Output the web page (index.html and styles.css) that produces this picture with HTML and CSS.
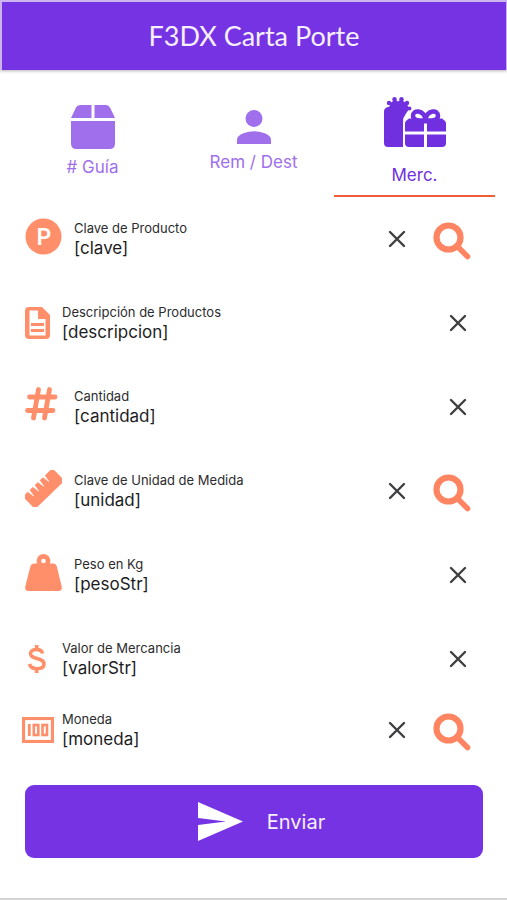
FILE: index.html
```html
<!DOCTYPE html>
<html lang="es">
<head>
<meta charset="utf-8">
<meta name="viewport" content="width=device-width, initial-scale=1">
<title>F3DX Carta Porte</title>
<link rel="stylesheet" href="styles.css">
</head>
<body>
<svg class="sprite" aria-hidden="true">
  <symbol id="close" viewBox="0 0 26 26"><path d="M6 6l14 14M20 6L6 20" fill="none" stroke="#3f3f42" stroke-width="2.400" stroke-linecap="round"/></symbol>
  <symbol id="search" viewBox="0 0 38 38"><circle cx="15.500" cy="15.500" r="12" fill="none" stroke="currentColor" stroke-width="6.200"/><path d="M25 25l9.500 9.500" stroke="currentColor" stroke-width="5.600" stroke-linecap="round"/></symbol>
</svg>
<header class="topbar"><h1>F3DX Carta Porte</h1></header>
<nav class="tabs">
  <a class="tab" href="#guia">
    <svg width="44" height="44" viewBox="0 0 44 44" fill="currentColor"><path d="M9 0h11.500v13H0L5 2.500Q6.200 0 9 0zM23.500 0H35q2.800 0 4 2.500L44 13H23.500zM0 16h44v22.500q0 5.500-5.500 5.500h-33Q0 44 0 38.500z"/></svg>
    <span>#&nbsp;Guía</span>
  </a>
  <a class="tab" href="#remdest">
    <svg width="34" height="34" viewBox="0 0 34 34" fill="currentColor"><circle cx="17" cy="8.500" r="8.500"/><path d="M0 34v-4.500C0 24 11 21.200 17 21.200S34 24 34 29.500V34z"/></svg>
    <span>Rem / Dest</span>
  </a>
  <a class="tab active" href="#merc" aria-current="page">
    <svg width="62" height="60" viewBox="0 0 62 60"><g fill="currentColor"><circle cx="5" cy="6" r="2.200"/><circle cx="10.500" cy="2.200" r="2.200"/><circle cx="17.500" cy="2.200" r="2.200"/><circle cx="23" cy="6" r="2.200"/><circle cx="25.500" cy="11.500" r="1.900"/><path d="M6.500 6l4.500-3.500 3 2 3-2L22 6l3.500 5.500-3.500 5-2.800 5V50H4q-4 0-4-4V14q0-2.500 2.500-3.500l3-1z"/></g><path d="M19 50V26q0-3.500 3-5l3.500-2q.500-8 8.500-8 5 0 8 3.500 3-3.500 8-3.500 9 0 9.500 8.500V50z" fill="#fff"/><path d="M21 26.500q0-2 1.500-3l2.500-2h33l2.500 2q1.500 1 1.500 3v8H21zM21 37.500h41V46q0 4-4 4H25q-4 0-4-4z" fill="currentColor"/><path d="M41.500 23.500c-3 0-12.500 1-12.500-4.500 0-7 10.500-6 12.500 3 2-9 12.500-10 12.500-3 0 5.500-9.500 4.500-12.500 4.500z" fill="#fff" stroke="currentColor" stroke-width="4.500" stroke-linejoin="round"/><path d="M40 26.500h3V50h-3z" fill="#fff"/></svg>
    <span>Merc.</span>
  </a>
</nav>
<form class="form">
  <div class="row">
    <span class="icon raised"><svg width="37" height="37" viewBox="0 0 37 37"><circle cx="18.500" cy="18.500" r="18" fill="currentColor"/><text class="badge-letter" x="19" y="26.500" text-anchor="middle">P</text></svg></span>
    <div class="field"><label for="clave">Clave de Producto</label><input id="clave" value="[clave]"></div>
    <button class="clear" type="button" aria-label="Borrar"><svg width="26" height="26"><use href="#close"/></svg></button>
    <button class="search" type="button" aria-label="Buscar"><svg width="38" height="38"><use href="#search"/></svg></button>
  </div>
  <div class="row">
    <span class="icon small"><svg width="25" height="32" viewBox="0 0 25 32"><path d="M4 0h13l8 8v20q0 4-4 4H4q-4 0-4-4V4q0-4 4-4zm.500 3.500v25h16V12H13V3.500z" fill="currentColor" fill-rule="evenodd"/><path d="M6 17.500h13M6 23.500h13" stroke="currentColor" stroke-width="2.800"/></svg></span>
    <div class="field"><label for="descripcion">Descripción de Productos</label><input id="descripcion" value="[descripcion]"></div>
    <button class="clear" type="button" aria-label="Borrar"><svg width="26" height="26"><use href="#close"/></svg></button>
  </div>
  <div class="row">
    <span class="icon raised"><svg width="37" height="34" viewBox="0 0 37 34"><path d="M13.500 2.500l-5 28.500M24.500 2.500l-5 28.500M4.500 10h25.500M2.500 23.500h25.500" stroke="currentColor" stroke-width="4.800" stroke-linecap="round"/></svg></span>
    <div class="field"><label for="cantidad">Cantidad</label><input id="cantidad" value="[cantidad]"></div>
    <button class="clear" type="button" aria-label="Borrar"><svg width="26" height="26"><use href="#close"/></svg></button>
  </div>
  <div class="row">
    <span class="icon raised"><svg width="37" height="37" viewBox="0 0 37 37"><g transform="rotate(-44 18.500 18.500)"><rect x="-2" y="10" width="41" height="17.500" rx="4" fill="currentColor"/><path d="M5 9.500h2.400l-1.200 7.500zM12 9.500h2.400l-1.200 7.500zM19 9.500h2.400l-1.200 7.500zM26 9.500h2.400l-1.200 7.500z" fill="#fff" stroke="#fff" stroke-width=".600"/></g></svg></span>
    <div class="field"><label for="unidad">Clave de Unidad de Medida</label><input id="unidad" value="[unidad]"></div>
    <button class="clear" type="button" aria-label="Borrar"><svg width="26" height="26"><use href="#close"/></svg></button>
    <button class="search" type="button" aria-label="Buscar"><svg width="38" height="38"><use href="#search"/></svg></button>
  </div>
  <div class="row">
    <span class="icon raised"><svg width="37" height="37" viewBox="0 0 37 37"><path d="M9 9.500h19.500q2.500 0 3.200 2.500l5 20.500q.900 4.500-3.200 4.500H3.500Q-.600 37 .300 32.500L5.500 12Q6.300 9.500 9 9.500z" fill="currentColor"/><circle cx="18.500" cy="7" r="4.600" fill="#fff" stroke="currentColor" stroke-width="4.600"/></svg></span>
    <div class="field"><label for="peso">Peso en Kg</label><input id="peso" value="[pesoStr]"></div>
    <button class="clear" type="button" aria-label="Borrar"><svg width="26" height="26"><use href="#close"/></svg></button>
  </div>
  <div class="row">
    <span class="icon small"><svg width="25" height="30" viewBox="0 0 25 30"><path d="M17.500 9.500C17 6.700 14.800 5.500 11.500 5.500c-3.700 0-6 1.600-6 4.200 0 6.300 13.500 3.300 13.500 10.300 0 3-2.800 4.700-7 4.700-4.500 0-6.800-1.700-7.500-4.700M11.700 1v4M11.700 25v4" fill="none" stroke="currentColor" stroke-width="3.600"/></svg></span>
    <div class="field"><label for="valor">Valor de Mercancia</label><input id="valor" value="[valorStr]"></div>
    <button class="clear" type="button" aria-label="Borrar"><svg width="26" height="26"><use href="#close"/></svg></button>
  </div>
  <div class="row last">
    <span class="icon small"><svg width="32" height="26" viewBox="0 0 32 26" fill="none" stroke="currentColor"><rect x="1.500" y="1.500" width="29" height="23" stroke-width="3.200"/><path d="M7.300 7v12" stroke-width="2.800"/><rect x="11.800" y="8" width="4.500" height="10" stroke-width="2.600"/><rect x="20.500" y="8" width="4.500" height="10" stroke-width="2.600"/></svg></span>
    <div class="field"><label for="moneda">Moneda</label><input id="moneda" value="[moneda]"></div>
    <button class="clear" type="button" aria-label="Borrar"><svg width="26" height="26"><use href="#close"/></svg></button>
    <button class="search" type="button" aria-label="Buscar"><svg width="38" height="38"><use href="#search"/></svg></button>
  </div>
  <button class="submit" type="submit">
    <svg width="45" height="39" viewBox="0 0 45 39" fill="#fff"><path d="M0 0l45 19.500L0 39V23l28-3.500L0 16z"/></svg>
    <span>Enviar</span>
  </button>
</form>
</body>
</html>
```
FILE: styles.css
```css
* { box-sizing: border-box; }

body {
  margin: 0;
  min-height: 100vh;
  background: #fff;
  border-bottom: 2px solid #d3d3d3;
  font-family: Inter, "Liberation Sans", sans-serif;
  color: #1c1c1e;
}

svg { display: block; flex-shrink: 0; }
.sprite { position: absolute; width: 0; height: 0; }

.topbar {
  height: 70px;
  display: flex;
  align-items: center;
  justify-content: center;
  background: #7633e4;
  border: solid #cbb4f0;
  border-width: 2px 1px 0 2px;
  box-shadow: 0 1px 3px rgba(0, 0, 0, 0.3);
}

.topbar h1 {
  margin: 0;
  font: 400 27px/36px Lato, sans-serif;
  color: #f6efff;
}

.tabs {
  display: grid;
  grid-template-columns: repeat(3, 1fr);
  padding: 16px 12px 0;
}

.tab {
  height: 111px;
  display: flex;
  flex-direction: column;
  align-items: center;
  justify-content: center;
  gap: 8px;
  border-bottom: 2px solid transparent;
  color: #a06fec;
  font-size: 17px;
  line-height: 20px;
  text-decoration: none;
}

.tab.active { color: #7030e0; border-color: #ee5f38; }

.row {
  height: 84px;
  display: flex;
  align-items: center;
  padding: 0 36px 0 25px;
}

.row.last { height: 58px; }

.icon {
  width: 37px;
  margin-right: 12px;
  display: flex;
  justify-content: center;
  flex-shrink: 0;
  color: #ff8f6b;
}

.icon.raised { padding-bottom: 6px; }
.icon.small { width: 25px; }

.badge-letter { font: 600 23px Inter, sans-serif; fill: #fff; }

.field {
  flex: 1;
  min-width: 0;
  display: flex;
  flex-direction: column;
}

.field label { font-size: 13px; line-height: 18px; color: #2c2c2e; }

.field input {
  width: 100%;
  height: 22px;
  padding: 0;
  border: 0;
  outline: 0;
  background: none;
  font: 400 17px/22px Inter, sans-serif;
  color: #1c1c1e;
}

.clear, .search {
  padding: 0;
  border: 0;
  background: none;
  color: #ff8562;
  cursor: pointer;
}

.search { margin-left: 23px; padding-top: 4px; }

.submit {
  width: calc(100% - 49px);
  height: 73px;
  margin: 26px 24px 40px 25px;
  display: flex;
  align-items: center;
  justify-content: center;
  gap: 24px;
  padding: 0 0 0 15px;
  border: 0;
  border-radius: 9px;
  background: #7633e4;
  color: #f6efff;
  font: 400 20px/24px Inter, sans-serif;
  cursor: pointer;
}
```
